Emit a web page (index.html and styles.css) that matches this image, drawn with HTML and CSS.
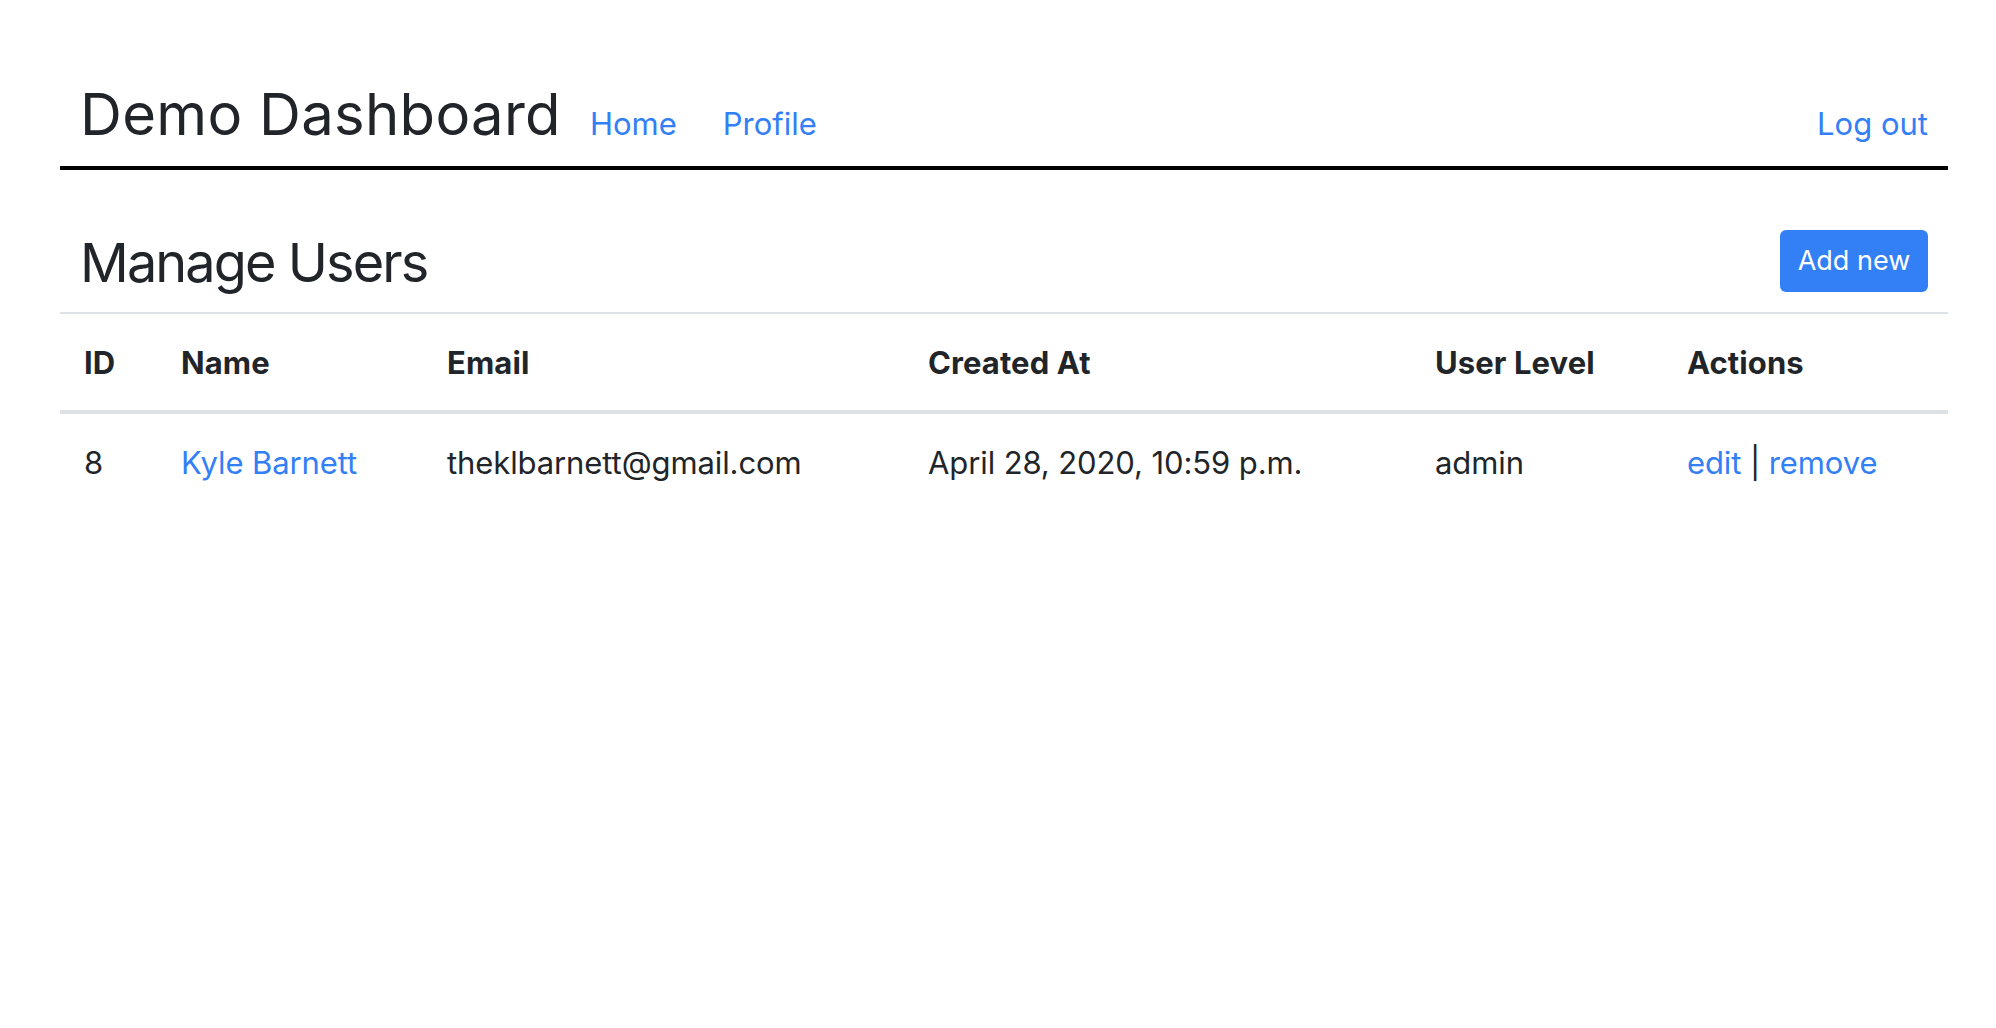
FILE: index.html
```html
<!DOCTYPE html>
<html lang="en">
<head>
<meta charset="utf-8">
<title>Demo Dashboard</title>
<link rel="stylesheet" href="styles.css">
</head>
<body>
<div class="page">
  <header class="topbar">
    <h1 class="brand">Demo Dashboard</h1>
    <nav class="nav">
      <a href="#" class="nav-link">Home</a>
      <a href="#" class="nav-link">Profile</a>
    </nav>
    <a href="#" class="nav-link logout">Log out</a>
  </header>

  <section class="section-head">
    <h2 class="section-title">Manage Users</h2>
    <a href="#" class="btn">Add new</a>
  </section>

  <table class="users">
    <thead>
      <tr>
        <th class="c-id">ID</th>
        <th class="c-name">Name</th>
        <th class="c-email">Email</th>
        <th class="c-created">Created At</th>
        <th class="c-level">User Level</th>
        <th class="c-actions">Actions</th>
      </tr>
    </thead>
    <tbody>
      <tr>
        <td>8</td>
        <td><a href="#">Kyle Barnett</a></td>
        <td>theklbarnett@gmail.com</td>
        <td>April 28, 2020, 10:59 p.m.</td>
        <td>admin</td>
        <td><a href="#">edit</a> | <a href="#">remove</a></td>
      </tr>
    </tbody>
  </table>
</div>
</body>
</html>
```

FILE: styles.css
```css
* { box-sizing: border-box; }

html, body {
  margin: 0;
  padding: 0;
  background: #ffffff;
}

body {
  font-family: Inter, "Noto Sans", "Liberation Sans", sans-serif;
  color: #212529;
}

a {
  color: #3380f6;
  text-decoration: none;
}

.page {
  margin-left: 60px;
  width: 1888px;
  padding-top: 80px;
}

.topbar {
  display: flex;
  align-items: baseline;
  padding: 0 20px 16px 20px;
  border-bottom: 4px solid #000000;
}

.brand {
  margin: 0;
  font-size: 58px;
  font-weight: 400;
  line-height: 1.2;
  letter-spacing: 0.3px;
}

.nav {
  display: flex;
  align-items: baseline;
  margin-left: 29px;
  gap: 46px;
}

.nav-link {
  font-size: 31px;
  line-height: 1.5;
}

.logout {
  margin-left: auto;
}

.section-head {
  display: flex;
  align-items: flex-start;
  justify-content: space-between;
  padding: 60px 20px 16px 20px;
}

.section-title {
  margin: 1.5px 0 0 0;
  font-size: 54px;
  font-weight: 400;
  line-height: 1.2;
  letter-spacing: -1.9px;
}

.btn {
  display: flex;
  align-items: center;
  justify-content: center;
  width: 148px;
  height: 62px;
  background: #3380f6;
  color: #ffffff;
  border-radius: 6px;
  font-size: 27px;
}

.users {
  width: 1888px;
  border-collapse: collapse;
  table-layout: fixed;
  font-size: 31px;
}

.users th,
.users td {
  text-align: left;
  padding: 25px 24px 23px 24px;
  line-height: 48px;
  vertical-align: top;
  white-space: nowrap;
}

.users td {
  letter-spacing: -0.1px;
}

.users th {
  font-weight: 700;
  letter-spacing: 0.1px;
  border-top: 2px solid #dee2e6;
  border-bottom: 4px solid #dee2e6;
}

.c-id { width: 97px; }
.c-name { width: 266px; }
.c-email { width: 481px; }
.c-created { width: 507px; }
.c-level { width: 252px; }
.c-actions { width: 285px; }
```
